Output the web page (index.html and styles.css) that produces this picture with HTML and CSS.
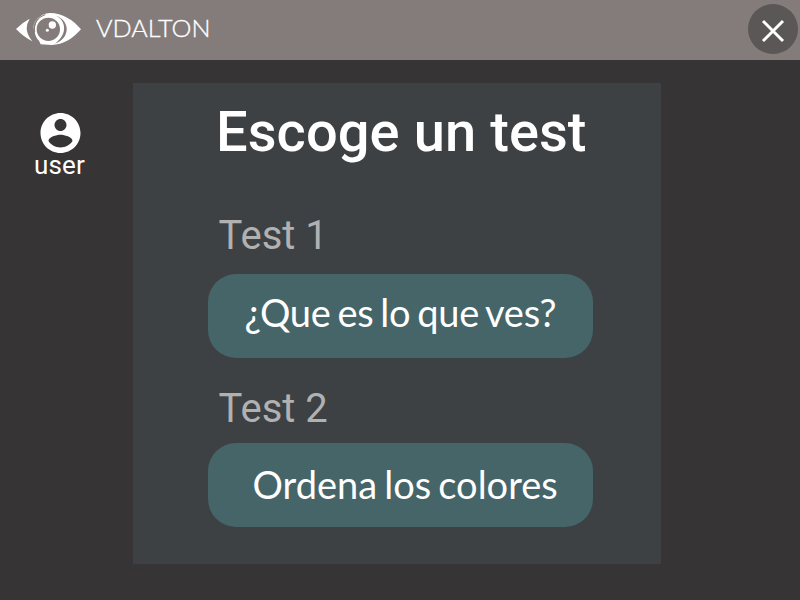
FILE: index.html
```html
<!DOCTYPE html>
<html lang="es">
<head>
<meta charset="utf-8">
<title>VDALTON</title>
<link rel="stylesheet" href="styles.css">
</head>
<body>
<header class="topbar">
  <svg class="logo" viewBox="45 36 201 102">
    <path fill="#fff" d="M48 87Q66 68 89 56Q80 70 80 87Q82 106 97 124Q70 110 48 87Z"/>
    <path fill="#fff" d="M99 93C98 64 118 41 150 39C187 39 220 60 243 88C219 116 190 134 155 135L122 133L117 122C109 115 104 105 104 91C104 72 113 55 126 46C109 55 101 71 99 93Z"/>
    <path fill="none" stroke="#837c7b" stroke-width="3" d="M104 96C100 72 112 52 136 44"/>
    <ellipse cx="145" cy="88" rx="35" ry="35" fill="#837c7b"/>
    <path fill="#837c7b" d="M168 47C197 60 205 101 165 131C211 115 212 62 168 47Z"/>
    <circle cx="157" cy="75" r="11" fill="#fff"/>
    <circle cx="142" cy="91" r="4.5" fill="#fff"/>
  </svg>
  <span class="brand">VDALTON</span>
  <button class="close" aria-label="Cerrar">
    <svg viewBox="0 0 24 24"><path d="M2 2L22 22M22 2L2 22"/></svg>
  </button>
</header>
<div class="content">
  <aside class="user">
    <svg class="avatar" viewBox="2 2 20 20"><path fill="#fff" d="M12 2C6.480 2 2 6.480 2 12s4.480 10 10 10 10-4.480 10-10S17.520 2 12 2zm0 3c1.660 0 3 1.340 3 3s-1.340 3-3 3-3-1.340-3-3 1.340-3 3-3zm0 14.200c-2.500 0-4.710-1.280-6-3.220.030-1.990 4-3.080 6-3.080 1.990 0 5.970 1.090 6 3.080-1.290 1.940-3.500 3.220-6 3.220z"/></svg>
    <span class="username">user</span>
  </aside>
  <main class="panel">
    <h1>Escoge un test</h1>
    <h2 class="first">Test 1</h2>
    <button class="test what">¿Que es lo que ves?</button>
    <h2 class="second">Test 2</h2>
    <button class="test order">Ordena los colores</button>
  </main>
</div>
</body>
</html>
```
FILE: styles.css
```css
* { box-sizing: border-box; }
body {
  margin: 0;
  width: 800px;
  height: 600px;
  overflow: hidden;
  background: #373435;
  color: #fff;
  font-family: Roboto, sans-serif;
}
button { border: 0; padding: 0; color: inherit; }
.topbar {
  display: flex;
  align-items: center;
  height: 60px;
  padding: 0 2px 0 15px;
  background: #837c7b;
}
.logo { width: 67px; height: 34px; margin-top: -2px; }
.brand {
  margin: -5px 0 0 14px;
  font: 300 23px/30px Lato, sans-serif;
  transform: scaleX(1.095);
  transform-origin: left center;
  -webkit-text-stroke: 0.3px #fff;
}
.close {
  display: flex;
  align-items: center;
  justify-content: center;
  width: 50px;
  height: 50px;
  margin-left: auto;
  margin-top: -2px;
  border-radius: 50%;
  background: #5b5757;
}
.close svg { width: 24px; height: 24px; margin-top: 4px; fill: none; stroke: #fff; stroke-width: 3; }
.content { display: flex; align-items: flex-start; }
.user {
  display: flex;
  flex-direction: column;
  align-items: center;
  width: 119px;
  margin-right: 14px;
  padding-top: 53px;
}
.avatar { width: 41px; height: 40px; margin-left: 1px; }
.username { font-size: 26px; line-height: 30px; letter-spacing: 0.15px; margin-top: -3px; }
.panel {
  display: flex;
  flex-direction: column;
  align-items: flex-start;
  width: 528px;
  height: 481px;
  margin-top: 23px;
  padding-left: 75px;
  background: #3d4143;
}
h1 { margin: 16px 0 0 8px; font-size: 56px; line-height: 66px; font-weight: 500; letter-spacing: 0.08px; white-space: nowrap; }
h2 { margin: 0 0 0 10.5px; font-size: 40px; line-height: 48px; font-weight: 400; color: #b1b1b1; }
.first { margin-top: 47px; }
.second { margin-top: 27px; }
.test {
  width: 385px;
  height: 84px;
  border-radius: 28px;
  background: #456569;
  font: 400 38px/44px Lato, sans-serif;
  word-spacing: -2.6px;
  text-align: left;
  white-space: nowrap;
}
.what { margin-top: 14px; padding: 0 0 8px 36.5px; letter-spacing: -0.25px; }
.order { margin-top: 10px; padding: 0 0 2px 44.5px; }
```
